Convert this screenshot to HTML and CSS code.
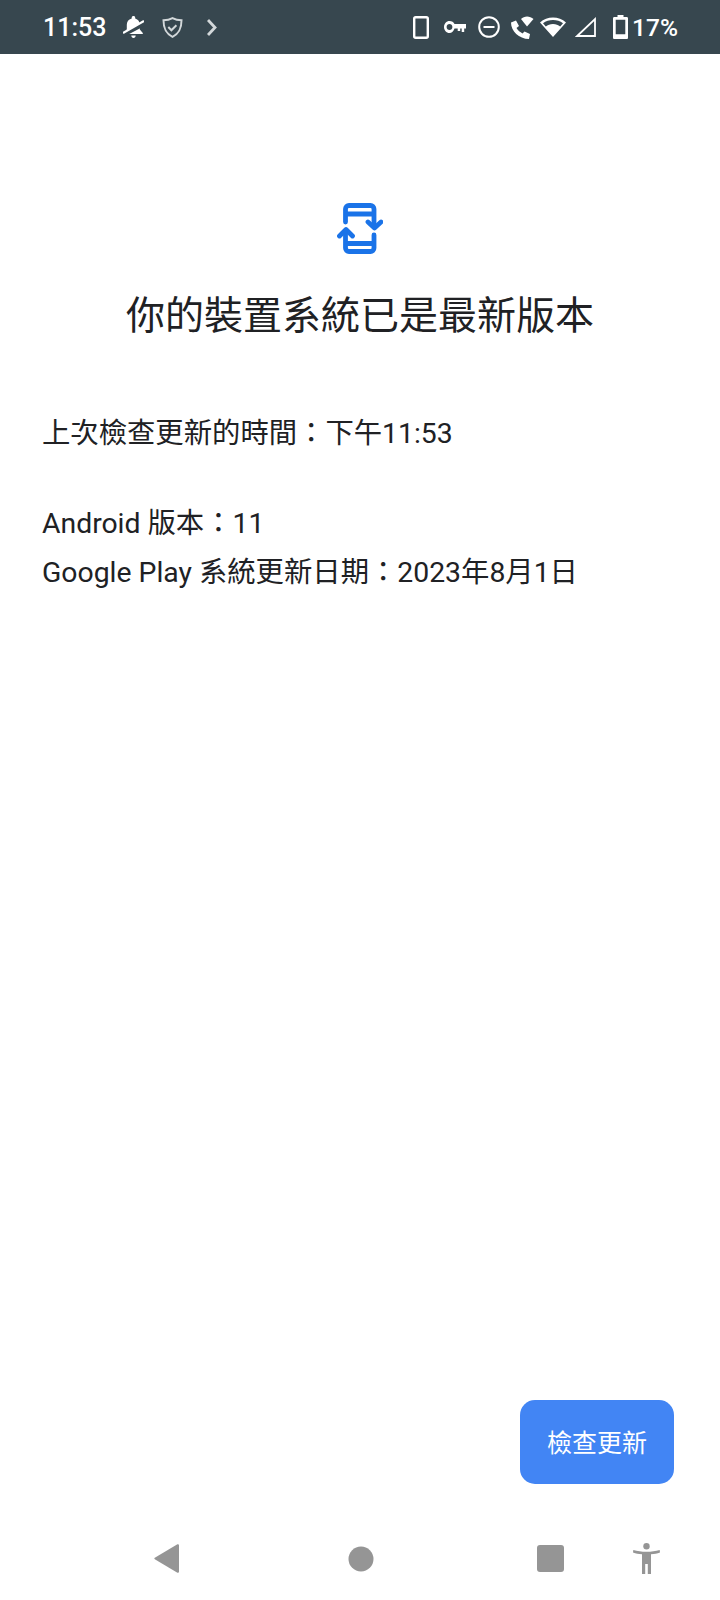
FILE: index.html
```html
<!DOCTYPE html>
<html lang="zh-Hant">
<head>
    <meta charset="UTF-8">
    <title>系統更新</title>
    <link rel="stylesheet" href="styles.css">
</head>
<body>

<div id="root">
    <div class="status">
        <div class="status-left">
            <span class="clock">11:53</span>
            <svg class="ic-bell" width="21" height="22" viewBox="0 0 21 22"><path fill="#fff" d="M10.500 0c1 0 1.700.7 1.700 1.700v.8c3 .8 4.600 3.300 4.600 6.300v4.700l3 3.500v1H1v-1l2.800-3.500V8.800c0-3 1.600-5.500 4.900-6.300v-.8c0-1 .8-1.700 1.800-1.700zM8.300 19.500h4.400c0 1.400-1 2.500-2.200 2.500s-2.200-1.100-2.200-2.500z"/><path fill="none" stroke="#37474f" stroke-width="4" d="M-1 19.500L22 7.500"/><path fill="none" stroke="#fff" stroke-width="2.200" d="M0 17L21 5"/></svg>
            <svg class="ic-shield" width="21" height="21" viewBox="0 0 21 21" fill="none" stroke="#d3d8da" stroke-width="2"><path d="M10.500 1.200c2.800 1.500 5.400 2.100 9 2.100 0 7-1.400 12.700-9 16.500C2.900 16 1.500 10.300 1.500 3.300c3.600 0 6.200-.6 9-2.100z"/><path d="M6.300 10l3.100 3.200 5-5"/></svg>
            <svg class="ic-more" width="10" height="17" viewBox="0 0 10 17" fill="none" stroke="#d3d8da" stroke-width="2.800"><path d="M1 1l7 7.500-7 7.500"/></svg>
        </div>
        <div class="status-right">
            <svg width="16" height="23" viewBox="0 0 16 23" fill="none" stroke="#fff" stroke-width="2.400"><rect x="1.200" y="1.200" width="13.600" height="20.600" rx="1.500"/></svg>
            <svg class="ic-key" width="22" height="12" viewBox="0 0 22 12"><path fill="#fff" fill-rule="evenodd" d="M5.500 0c2.300 0 4.200 1.300 5 3H22v4.500h-1.800V11h-2.500V7.500h-1.500V10h-2.500V7.500h-3.200C9.700 10 7.800 12 5.500 12 2.400 12 0 9.300 0 6s2.400-6 5.500-6zM5.500 3C3.900 3 2.600 4.300 2.600 6s1.300 3 2.900 3 2.900-1.300 2.900-3-1.300-3-2.900-3z"/></svg>
            <svg class="ic-dnd" width="22" height="22" viewBox="0 0 22 22" fill="none" stroke="#fff" stroke-width="2"><circle cx="11" cy="11" r="9.800"/><path d="M5.500 11h11"/></svg>
            <svg class="ic-call" width="24" height="24" viewBox="0 0 24 24" fill="#fff"><path d="M1 7.500l5-2 3 5.500L6.500 13c1.500 2.500 3.500 4 6 5.500l2-2L20 19l-1 5C9 24 1 16 1 7.500z"/><path d="M11 4c3-3.500 9-3.500 12.500 0L17 11.500z"/></svg>
            <svg class="ic-wifi" width="26" height="20" viewBox="0 0 26 20"><path fill="#fff" fill-rule="evenodd" d="M13 20L0 5.500C7-1.300 19-1.300 26 5.500zM13 7c-3 0-5.300 1-7.200 2.400L3 6.200C8.500 1.800 17.500 1.800 23 6.200l-2.800 3.200C18.300 8 16 7 13 7z"/></svg>
            <svg class="ic-signal" width="21" height="20" viewBox="0 0 21 20" fill="none" stroke="#fff" stroke-width="1.800"><path d="M20 2.200V19H2.200z"/></svg>
            <svg class="ic-batt" width="15" height="24" viewBox="0 0 15 24"><path fill="#fff" fill-rule="evenodd" d="M4.500 0h6v2h3c1 0 1.500.5 1.500 1.500v19c0 1-.5 1.500-1.500 1.500h-12C.5 24 0 23.500 0 22.500v-19C0 2.500.5 2 1.500 2h3zM2.700 4.700v14.600h9.600V4.700z"/></svg>
            <span class="pct">17%</span>
        </div>
    </div>

    <div class="main">
        <svg class="ic-update" width="46" height="51" viewBox="0 0 46 51" fill="none" stroke="#1a73e8" stroke-width="4.800" stroke-linecap="round" stroke-linejoin="round"><path d="M8.500 19V6a3.500 3.500 0 0 1 3.500-3.500h21.500A3.500 3.500 0 0 1 37 6v18M8.500 11H37"/><path d="M31 19l6.500 6 6.500-6"/><path d="M2.500 33L9 26.500l6.500 6.500"/><path d="M8.500 28v17a3.500 3.500 0 0 0 3.500 3.500h21.500A3.500 3.500 0 0 0 37 45V32M8.500 40.500H37"/></svg>
        <h1>你的裝置系統已是最新版本</h1>
        <p class="checked">上次檢查更新的時間：下午11:53</p>
        <p>Android 版本：11</p>
        <p>Google Play 系統更新日期：2023年8月1日</p>
    </div>

    <div class="actions">
        <button class="btn">檢查更新</button>
    </div>

    <div class="nav">
        <svg class="nav-back" width="25" height="29" viewBox="0 0 25 29"><path fill="#959595" d="M23 .4c1-.6 2 0 2 1.100v26c0 1.100-1 1.700-2 1.100L.8 15.200c-.6-.4-.6-1 0-1.400z"/></svg>
        <svg class="nav-home" width="26" height="26" viewBox="0 0 26 26"><circle fill="#959595" cx="13" cy="13" r="12.500"/></svg>
        <svg class="nav-recent" width="27" height="27" viewBox="0 0 27 27"><rect fill="#959595" width="27" height="27" rx="3"/></svg>
        <svg class="nav-a11y" width="27" height="31" viewBox="0 0 27 31"><circle fill="#959595" cx="13.500" cy="3.200" r="3.200"/><path fill="#959595" d="M.3 7c4.200 1.200 8.200 1.800 13.200 1.800S22.500 8.200 26.700 7l.3 2.500c-3 1-5.500 1.500-9 1.800V31h-3.200V21h-2.600v10H9V11.300c-3.500-.3-6-.8-9-1.800z"/></svg>
    </div>
</div>

</body>
</html>
```

FILE: styles.css
```css
html, body{
    margin: 0;
    padding: 0;
    background: #fff;
}
#root{
    width: 720px;
    height: 1600px;
    display: flex;
    flex-direction: column;
    font-family: Roboto, "Noto Sans CJK TC", sans-serif;
    color: #202124;
}
svg{
    display: block;
    flex: none;
}
.status{
    height: 54px;
    background: #37474f;
    display: flex;
    align-items: center;
    justify-content: space-between;
    padding: 0 42px 0 43px;
    color: #fff;
}
.status-left, .status-right{
    display: flex;
    align-items: center;
}
.clock{
    font-size: 25px;
    font-weight: 500;
    width: 80px;
}
.ic-shield{
    margin-left: 18px;
}
.ic-more{
    margin-left: 24px;
}
.ic-key{
    margin-left: 15px;
}
.ic-dnd{
    margin-left: 12px;
}
.ic-call{
    margin-left: 10px;
}
.ic-wifi{
    margin-left: 6px;
}
.ic-signal{
    margin-left: 9px;
}
.ic-batt{
    margin-left: 17px;
}
.pct{
    font-size: 24.5px;
    font-weight: 500;
    margin-left: 4px;
}
.main{
    flex: 1;
    padding: 149px 42px 0;
    display: flex;
    flex-direction: column;
}
.ic-update{
    align-self: center;
}
h1{
    margin: 36px 0 0;
    font-size: 39px;
    font-weight: 400;
    line-height: 52px;
    text-align: center;
}
.main p{
    margin: 0;
    font-size: 28.35px;
    line-height: 49px;
}
.main p.checked{
    margin: 67px 0 41px;
}
.actions{
    display: flex;
    justify-content: flex-end;
    padding: 0 46px 42px 0;
}
.btn{
    width: 154px;
    height: 84px;
    border: 0;
    border-radius: 15px;
    background: #4285f4;
    color: #fff;
    font-family: inherit;
    font-size: 25px;
    padding: 0 0 2px;
}
.nav{
    height: 74px;
    display: flex;
    align-items: flex-start;
}
.nav-back{
    margin: 18px 0 0 154px;
}
.nav-home{
    margin: 20px 0 0 169px;
}
.nav-recent{
    margin: 19px 0 0 163px;
}
.nav-a11y{
    margin: 17px 0 0 69px;
}
```
